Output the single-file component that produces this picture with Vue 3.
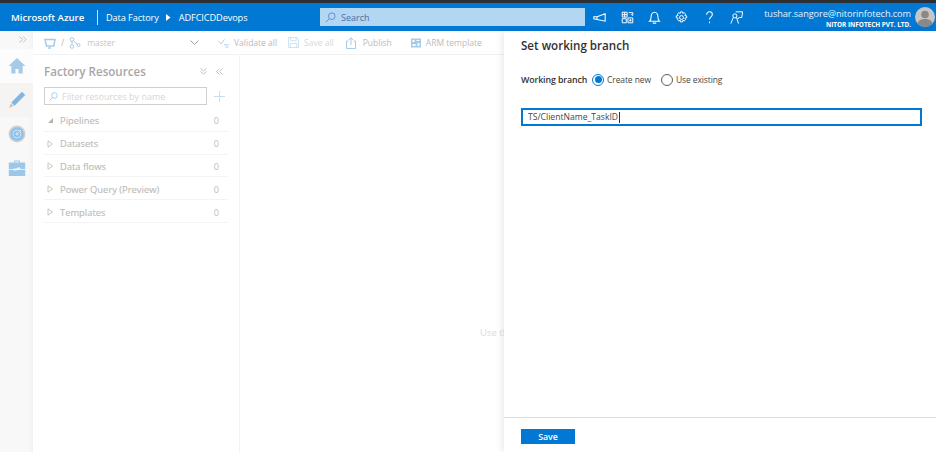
<script setup>
const resources = [
  { name: 'Pipelines', open: true },
  { name: 'Datasets' },
  { name: 'Data flows' },
  { name: 'Power Query (Preview)' },
  { name: 'Templates' },
]
</script>

<template>
  <div class="app">
    <div class="topstrip"></div>
    <header class="header">
      <span class="brand">Microsoft Azure</span>
      <span class="divider"></span>
      <span class="crumb">Data Factory</span>
      <svg class="crumb-arrow" width="5" height="7" viewBox="0 0 5 7"><path d="M0 0l4.5 3.5L0 7z" fill="#fff" /></svg>
      <span class="crumb">ADFCICDDevops</span>
      <div class="search">
        <svg width="11" height="11" viewBox="0 0 11 11" fill="none" stroke="#5b93cf" stroke-width="1"><circle cx="6.800" cy="4.200" r="3.300" /><path d="M4.300 6.700L.8 10.200" /></svg>
        <span>Search</span>
      </div>
      <div class="head-icons">
        <svg width="13" height="13" viewBox="0 0 16 16" fill="none" stroke="#fff" stroke-width="1.300"><path d="M1 7h4l10-3.500v9L5 10.500 1 9.500zM5 7v3.500" /></svg>
        <svg width="13" height="13" viewBox="0 0 16 16" fill="none" stroke="#fff" stroke-width="1.200"><path d="M1.500 1.500h6v6h-6zM1.500 4.500h6M4.500 1.500v6M9.500 2h5M14.500 2v3M12.500 4l2 2M8.500 8.500h6v6h-6zM1.500 9.500h5v5h-5zM11.500 10v3M10 11.500h3" /></svg>
        <svg width="13" height="13" viewBox="0 0 16 16" fill="none" stroke="#fff" stroke-width="1.300"><path d="M2 12.500h12c-1.200-1-1.800-2.500-1.800-5.500 0-3-1.800-5.500-4.200-5.500S3.800 4 3.800 7c0 3-.6 4.500-1.800 5.500zM6 14.300c.6 1 3.400 1 4 0" /></svg>
        <svg width="13" height="13" viewBox="0 0 16 16" fill="none" stroke="#fff" stroke-width="1.200"><circle cx="8" cy="8" r="2.400" /><path d="M6.800 1h2.400l.4 2 1.700-.9 1.800 1.700-1 1.700 2.300.5v2.400l-2.300.5 1 1.700-1.800 1.700-1.700-1-.4 2.200H6.800l-.4-2.200-1.700 1-1.800-1.700 1-1.700-2.300-.5V6l2.300-.5-1-1.700 1.800-1.700 1.700.9z" /></svg>
        <svg width="13" height="13" viewBox="0 0 16 16" fill="none" stroke="#fff" stroke-width="1.300"><path d="M4.500 4.500C4.500 2.500 6 1 8 1s3.500 1.500 3.500 3.300c0 2.900-3.500 3.200-3.500 6.200" /><path d="M8 13v2" /></svg>
        <svg width="13" height="13" viewBox="0 0 16 16" fill="none" stroke="#fff" stroke-width="1.200"><path d="M7 1h8.500l-1 7h-3l-1.500 1.500V8" /><circle cx="6" cy="6" r="2.500" /><path d="M1 15.500l3-7.500M10.500 15.500L8 8" /></svg>
      </div>
      <div class="user">
        <div class="email">tushar.sangore@nitorinfotech.com</div>
        <div class="org">NITOR INFOTECH PVT. LTD.</div>
      </div>
      <svg class="avatar" width="20" height="20" viewBox="0 0 20 20">
        <circle cx="10" cy="10" r="10" fill="#c8c6c4" />
        <circle cx="10" cy="7.500" r="3.800" fill="#8a8886" />
        <path d="M2.500 16.500C3.500 13 6.500 12 10 12s6.500 1 7.500 4.500A10 10 0 0 1 2.500 16.500z" fill="#8a8886" />
      </svg>
    </header>

    <div class="body">
      <nav class="rail">
        <svg class="expand" width="8" height="7" viewBox="0 0 8 7" fill="none" stroke="#b5b3b1" stroke-width=".8"><path d="M.5 .5l3 3-3 3M4 .5l3 3-3 3" /></svg>
        <div class="rail-item home">
          <svg width="18" height="18" viewBox="0 0 18 18"><path d="M9 1L.6 9h2.700v7.500h4.200v-4.500h3v4.500h4.200V9h2.700z" fill="#a5cbe9" /></svg>
        </div>
        <div class="rail-item active">
          <svg width="18" height="18" viewBox="0 0 18 18"><path d="M14 .8l3.200 3.200L6.500 14.700l-3.200-3.200z" fill="#7fb6e3" /><path d="M1 17l2-4.800 2.800 2.800z" fill="#c8c6c4" /></svg>
        </div>
        <div class="rail-item">
          <svg width="18" height="18" viewBox="0 0 18 18" fill="none"><circle cx="9" cy="9" r="8.500" fill="#d2d0ce" /><circle cx="9" cy="9" r="6.800" fill="#8cc1ea" /><circle cx="9" cy="9" r="4" stroke="#cde3f5" /><circle cx="9" cy="9" r="1.400" fill="#cde3f5" /><path d="M9 9l4-4" stroke="#cde3f5" /></svg>
        </div>
        <div class="rail-item">
          <svg width="18" height="18" viewBox="0 0 18 18"><path d="M6 3.500V1.500h6v2h-1.200v-1H7.200v1z" fill="#9dc7e8" /><rect x=".8" y="3.500" width="16.400" height="13.500" fill="#9dc7e8" /><path d="M.8 10.500h16.400" stroke="#e3f0fa" /><path d="M5.500 9.500h3l.8-.9h3v1.800h-3l-.8 1h-3z" fill="#eef6fc" /></svg>
        </div>
      </nav>

      <main class="studio">
        <div class="toolbar">
          <svg width="12" height="12" viewBox="0 0 12 12" fill="none" stroke="#a5cbe9" stroke-width="1.500"><path d="M1 2.500h10l-1.200 6.500H2.500z" /><path d="M4 11h3" /></svg>
          <span class="slash">/</span>
          <svg width="12" height="12" viewBox="0 0 12 12" fill="none" stroke="#a5cbe9"><circle cx="3" cy="2.500" r="1.800" /><circle cx="3" cy="9.500" r="1.800" /><circle cx="9.500" cy="8" r="1.500" /><path d="M3 4.300v3.400M4.500 4l3.500 3" /></svg>
          <span class="branch">master</span>
          <svg class="chev" width="9" height="5" viewBox="0 0 9 5" fill="none" stroke="#a19f9d"><path d="M.5 .5l4 4 4-4" /></svg>
          <span class="tool validate">
            <svg width="11" height="11" viewBox="0 0 12 12" fill="none" stroke="#a5cbe9"><path d="M.5 4.500l3 3 3.500-5M6.500 8.500h5M8 11h3.500" /></svg>
            Validate all
          </span>
          <span class="tool dim">
            <svg width="11" height="11" viewBox="0 0 12 12" fill="none" stroke="#c6dff2"><path d="M.5 .5h9l2 2v9H.5zM3 .5v3.500h6V.5M2.500 11.500V7h7v4.500" /></svg>
            Save all
          </span>
          <span class="tool publish">
            <svg width="10" height="12" viewBox="0 0 10 12" fill="none" stroke="#a5cbe9"><path d="M2.500 4H.5v7.500h9V4H7.500M5 8V.8M2.800 3L5 .8 7.200 3" /></svg>
            Publish
          </span>
          <span class="tool arm">
            <svg width="10" height="10" viewBox="0 0 10 10"><rect width="10" height="9" y=".5" fill="#a5cbe9" /><path d="M1.500 2h2v2h-2zM5.500 2h3v1h-3zM1.500 6h3v2h-3zM6.500 5h2v3h-2z" fill="#fff" /></svg>
            ARM template
          </span>
        </div>

        <div class="workspace">
          <aside class="resources">
            <div class="res-head">
              <span class="res-title">Factory Resources</span>
              <svg class="sort" width="7" height="7" viewBox="0 0 7 7" fill="none" stroke="#b5b3b1" stroke-width=".8"><path d="M.5 .5L3.500 3 6.500 .5M.5 3.500L3.500 6l3-2.500" /></svg>
              <svg width="7" height="7" viewBox="0 0 7 7" fill="none" stroke="#b5b3b1" stroke-width=".8"><path d="M3.500 .5L.5 3.500l3 3M6.500 .5l-3 3 3 3" /></svg>
            </div>
            <div class="filter-row">
              <div class="filter">
                <svg width="9" height="9" viewBox="0 0 9 9" fill="none" stroke="#a5cbe9"><circle cx="5.500" cy="3.500" r="2.800" /><path d="M3.500 5.500L.5 8.500" /></svg>
                <span>Filter resources by name</span>
              </div>
              <svg width="11" height="11" viewBox="0 0 11 11" stroke="#c6dff2"><path d="M5.500 0v11M0 5.500h11" /></svg>
            </div>
            <ul class="res-list">
              <li v-for="r in resources" :key="r.name" class="res-row">
                <svg v-if="r.open" width="7" height="7" viewBox="0 0 7 7"><path d="M6 1v5H1z" fill="#b5b3b1" /></svg>
                <svg v-else width="6" height="8" viewBox="0 0 6 8" fill="none" stroke="#c8c6c4"><path d="M.5 .8L5 4 .5 7.200z" /></svg>
                <span class="res-name">{{ r.name }}</span>
                <span class="res-count">0</span>
              </li>
            </ul>
          </aside>
          <div class="canvas">
            <span class="hint">Use the</span>
          </div>
        </div>
      </main>

      <section class="panel">
        <div class="panel-body">
          <h2 class="panel-title">Set working branch</h2>
          <div class="radio-row">
            <span class="radio-label">Working branch</span>
            <span class="radio on"><i></i></span>
            <span class="radio-text first">Create new</span>
            <span class="radio"></span>
            <span class="radio-text">Use existing</span>
          </div>
          <div class="input">TS/ClientName_TaskID<i class="caret"></i></div>
        </div>
        <div class="panel-foot">
          <button class="save">Save</button>
        </div>
      </section>
    </div>
  </div>
</template>

<style>
html, body {
  margin: 0;
  background: #fff;
}
</style>

<style scoped>
.app {
  width: 936px;
  height: 452px;
  overflow: hidden;
  display: flex;
  flex-direction: column;
  font-family: "Open Sans", "Noto Sans", sans-serif;
  font-size: 9.5px;
  color: #323130;
}
.topstrip {
  height: 3px;
  background: #2c2f33;
}
.header {
  height: 28px;
  background: #0078d4;
  color: #fff;
  display: flex;
  align-items: center;
  padding-left: 11px;
  flex: none;
}
.brand {
  font-weight: 600;
  font-size: 9.600px;
  width: 86px;
}
.divider {
  width: 1px;
  height: 15px;
  background: #cfe4f6;
  margin: 0 8px 0 0;
}
.crumb {
  font-size: 9.200px;
  letter-spacing: -.1px;
}
.crumb-arrow {
  margin: 0 8px 0 7px;
}
.search {
  position: absolute;
  left: 320px;
  top: 8px;
  width: 265px;
  height: 18px;
  background: #b3d6f2;
  display: flex;
  align-items: center;
  gap: 5px;
  padding-left: 5px;
  box-sizing: border-box;
  color: #4a6fa5;
  font-size: 9px;
}
.head-icons {
  margin-left: auto;
  display: flex;
  gap: 14.400px;
  margin-right: 21px;
}
.user {
  text-align: right;
  margin-right: 4px;
  padding-top: 4px;
  line-height: 11px;
}
.email {
  font-size: 9.200px;
  letter-spacing: -.08px;
  color: #e8f3fb;
}
.org {
  font-size: 6.400px;
  font-weight: 700;
}
.avatar {
  margin-right: 1px;
}
.body {
  flex: 1;
  display: flex;
  position: relative;
  min-height: 0;
}
.rail {
  width: 33px;
  flex: none;
  background: linear-gradient(90deg, #f8f8f8, #f8f8f8 85%, #f2f2f2);
  display: flex;
  flex-direction: column;
}
.expand {
  align-self: flex-end;
  margin: 5px 6px 6px 0;
}
.rail-item {
  height: 34px;
  display: flex;
  align-items: center;
  justify-content: center;
}
.rail-item.home {
  background: #fcfcfc;
}
.rail-item.active {
  background: #f5f4f3;
}
.studio {
  flex: 1;
  min-width: 0;
  display: flex;
  flex-direction: column;
}
.toolbar {
  height: 24px;
  flex: none;
  border-bottom: 1px solid #f2f2f2;
  display: flex;
  align-items: center;
  padding-left: 11px;
  color: #c8c6c4;
  font-size: 8.500px;
  box-sizing: border-box;
}
.slash {
  margin: 0 5px;
  color: #b5b3b1;
}
.branch {
  margin-left: 6px;
}
.chev {
  margin-left: 75px;
}
.tool {
  display: inline-flex;
  align-items: center;
  gap: 5px;
  margin-left: 12px;
  color: #bdbbb9;
}
.tool.validate {
  margin-left: 19px;
}
.tool.dim {
  color: #d9d7d5;
  margin-left: 11px;
}
.tool.publish {
  gap: 7px;
}
.tool.arm {
  margin-left: 19px;
}
.workspace {
  flex: 1;
  display: flex;
  min-height: 0;
}
.resources {
  width: 207px;
  flex: none;
  box-sizing: border-box;
  border-right: 1px solid #f3f3f3;
  padding: 0 11px 0 11px;
}
.res-head {
  display: flex;
  align-items: center;
  height: 32px;
  gap: 9px;
  padding-right: 5px;
}
.res-title {
  font-size: 11.600px;
  font-weight: 600;
  color: #a8a6a4;
  margin-right: auto;
}
.filter-row {
  display: flex;
  align-items: center;
  gap: 7px;
}
.filter {
  width: 163px;
  height: 18px;
  box-sizing: border-box;
  border: 1px solid #d2d0ce;
  display: flex;
  align-items: center;
  gap: 4px;
  padding-left: 4px;
  color: #d8d6d4;
  font-size: 9px;
}
.res-list {
  list-style: none;
  margin: 4px 0 0;
  padding: 0;
}
.res-row {
  height: 22.800px;
  display: flex;
  align-items: center;
  border-bottom: 1px solid #f3f3f3;
  box-sizing: border-box;
  padding: 2px 0 0 3px;
}
.res-row svg {
  width: 7px;
  flex: none;
}
.res-name {
  margin-left: 6px;
  color: #bdbbb9;
  font-size: 9.400px;
  -webkit-text-stroke: .15px #bdbbb9;
}
.res-count {
  margin-left: auto;
  margin-right: 9px;
  color: #bdbbb9;
  font-size: 9px;
}
.canvas {
  flex: 1;
  position: relative;
}
.hint {
  position: absolute;
  left: 240px;
  top: 271px;
  color: #dcdad8;
  font-size: 9.500px;
}
.panel {
  position: absolute;
  left: 504px;
  right: 0;
  top: 0;
  bottom: 0;
  background: #fff;
  box-shadow: -3px 0 6px rgba(0, 0, 0, .07);
  display: flex;
  flex-direction: column;
}
.panel-body {
  flex: 1;
  padding: 6px 14px 0 17px;
}
.panel-title {
  margin: 0;
  font-size: 11.600px;
  font-weight: 600;
  line-height: 17px;
  color: #323130;
}
.radio-row {
  display: flex;
  align-items: center;
  margin-top: 19px;
  height: 13px;
  font-size: 8.500px;
  letter-spacing: -.1px;
}
.radio-label {
  font-weight: 600;
  width: 71px;
  font-size: 8.800px;
}
.radio {
  width: 10px;
  height: 10px;
  border: 1px solid #605e5c;
  border-radius: 50%;
  box-sizing: content-box;
  display: flex;
  align-items: center;
  justify-content: center;
}
.radio.on {
  border-color: #0078d4;
}
.radio.on i {
  width: 7px;
  height: 7px;
  border-radius: 50%;
  background: #0078d4;
}
.radio-text {
  margin-left: 3px;
  color: #484644;
}
.radio-text.first {
  margin-right: 10px;
}
.input {
  margin-top: 22px;
  height: 18px;
  box-sizing: border-box;
  border: 2px solid #0078d4;
  display: flex;
  align-items: center;
  padding-left: 5px;
  font-size: 8.600px;
  color: #484644;
}
.caret {
  width: 1px;
  height: 11px;
  background: #323130;
  margin-left: 1px;
}
.panel-foot {
  height: 35px;
  box-sizing: border-box;
  flex: none;
  border-top: 1px solid #e1dfdd;
  padding: 11px 0 0 17px;
}
.save {
  display: block;
  width: 54px;
  height: 15px;
  padding: 0;
  border: 0;
  background: #0078d4;
  color: #fff;
  font-family: inherit;
  font-size: 8.800px;
  font-weight: 600;
}
</style>
